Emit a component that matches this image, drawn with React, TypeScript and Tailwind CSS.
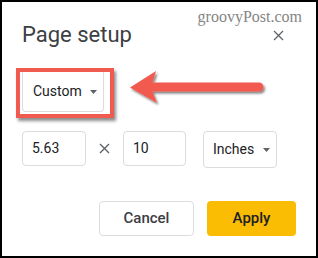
function Caret() {
  return (
    <svg width="7" height="4" viewBox="0 0 7 4" className="shrink-0">
      <path d="M0 0h7L3.5 4z" fill="#5f6368" />
    </svg>
  )
}

function Cross({ stroke = 1.4 }: { stroke?: number }) {
  return (
    <svg width="11" height="11" viewBox="0 0 11 11" className="shrink-0">
      <path d="M1 1L10 10M10 1L1 10" stroke="#5f6368" strokeWidth={stroke} />
    </svg>
  )
}

function Arrow() {
  // annotation arrow, drawn in page coords shifted by (128, 68)
  return (
    <svg width="142" height="42" viewBox="128 68 142 42" className="ml-[14px] shrink-0 overflow-visible">
      <defs>
        <filter id="arrowShadow" x="-10%" y="-30%" width="120%" height="160%">
          <feDropShadow dx="1.5" dy="2" stdDeviation="1.2" floodColor="#000" floodOpacity="0.5" />
        </filter>
      </defs>
      <path
        d="M130 87.5 L156 71 L152.5 82.5 L259 82.5 A4.5 4.5 0 0 1 259 91.5 L152.5 91.5 L157 103 Z"
        fill="#f25a50"
        filter="url(#arrowShadow)"
      />
    </svg>
  )
}

export default function App() {
  return (
    <div
      className="relative w-[318px] h-[258px] border-2 border-black bg-white overflow-hidden"
      style={{ fontFamily: "Roboto, 'Liberation Sans', sans-serif" }}
    >
      {/* Watermark */}
      <div
        className="absolute top-[7px] right-[14px] text-[16px] leading-[16px] text-[#858585]"
        style={{ fontFamily: "'Liberation Serif', serif" }}
      >
        groovyPost.com
      </div>

      {/* Header */}
      <div className="mt-[19px] flex items-center h-[28px] pl-[20px] pr-[32px]">
        <span className="text-[22px] leading-[28px] text-[#3c4043]">Page setup</span>
        <div className="ml-auto">
          <Cross stroke={1.3} />
        </div>
      </div>

      {/* Page size preset with annotation */}
      <div className="mt-[19px] flex items-start pl-[14px]">
        <div className="w-[98px] h-[50px] border-4 border-[#f05a4f] shadow-[2px_3px_3px_rgba(0,0,0,0.45)]">
          <div className="ml-[2px] w-[82px] h-[40px] flex items-center gap-[8px] pl-[10px] bg-white border border-t-0 border-[#dadce0] rounded-b-[4px] text-[14px] text-[#202124]">
            <span>Custom</span>
            <Caret />
          </div>
        </div>
        <Arrow />
      </div>

      {/* Dimensions */}
      <div className="mt-[13px] flex items-start pl-[20px] text-[14px] text-[#202124]">
        <div className="w-[64px] h-[35px] flex items-center pl-[9px] border border-[#dadce0] rounded-[4px]">5.63</div>
        <div className="ml-[13px] w-[11px] h-[35px] flex items-center">
          <Cross />
        </div>
        <div className="ml-[13px] w-[63px] h-[35px] flex items-center pl-[9px] border border-[#dadce0] rounded-[4px]">10</div>
        <div className="ml-[17px] w-[74px] h-[37px] flex items-center gap-[9px] pl-[9px] border border-[#dadce0] rounded-[4px]">
          <span>Inches</span>
          <Caret />
        </div>
      </div>

      {/* Actions */}
      <div className="mt-[33px] flex justify-end gap-[13px] pr-[20px] text-[15px] font-medium">
        <button className="w-[95px] h-[35px] border border-[#dadce0] rounded-[4px] bg-white text-[#3c4043]">Cancel</button>
        <button className="w-[89px] h-[35px] rounded-[4px] bg-[#fbbc04] text-[#202124]">Apply</button>
      </div>
    </div>
  )
}
